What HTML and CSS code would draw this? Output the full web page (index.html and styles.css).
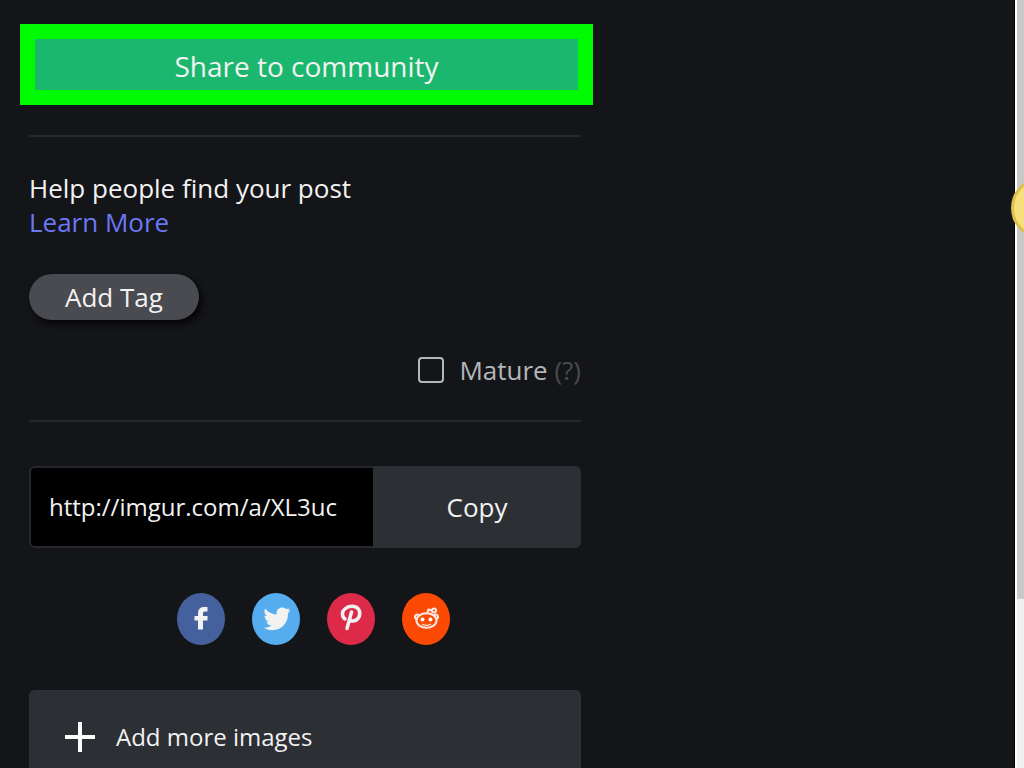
FILE: index.html
```
<!DOCTYPE html>
<html lang="en">
<head>
    <meta charset="UTF-8">
    <link rel="stylesheet" href="styles.css">
    <title>Imgur</title>
</head>
<body>
    <main class="page">
        <button type="button" class="share-btn">Share to community</button>

        <div class="panel">
            <section class="tags">
                <p>Help people find your post</p>
                <a href="#">Learn More</a>
                <button type="button" class="tag-btn">Add Tag</button>
                <div class="mature">
                    <input type="checkbox" id="mature">
                    <label for="mature">Mature <span class="hint">(?)</span></label>
                </div>
            </section>

            <form class="copy-box">
                <input type="text" id="link" aria-label="Post link" value="http://imgur.com/a/XL3uc" readonly>
                <button type="button">Copy</button>
            </form>

            <div class="social">
                <a href="#" class="facebook" aria-label="Facebook">
                    <svg viewBox="0 0 48 52">
                        <path d="M21 36.500V27.500H17.500V23H21V20.500C21 16.500 23 14 27 14H30.500V18.500H28C26.500 18.500 26 19.200 26 20.500V23H30.500V27.500H26V36.500Z" fill="#f2f2f2"/>
                    </svg>
                </a>
                <a href="#" class="twitter" aria-label="Twitter">
                    <svg viewBox="0 0 48 52">
                        <path d="M38 16.500C37 17 36.500 17.300 35.500 17.400C36.500 16.700 36.900 16 37.300 15C36.200 15.600 35.100 15.800 33.900 16C30.500 12.700 24.500 15 24.500 20.200L24.700 21.500C20 21.300 16 19 13.200 15.500C11.700 18.200 12.400 21.300 14.900 23.100C14 23 13.200 22.800 12.500 22.400C12.600 25.700 14.300 28 16.900 28.600C16 28.900 15.200 28.900 14.400 28.700C15.100 31 17 32.500 19.400 32.600C17.200 34.200 14.700 35 11.500 34.700C23.500 41.500 36.500 33.500 36 20.500C37 19.200 37.700 18 38 16.500Z" fill="#f2f2f2"/>
                    </svg>
                </a>
                <a href="#" class="pinterest" aria-label="Pinterest">
                    <svg viewBox="0 0 48 52">
                        <path d="M18 26C14.500 23.500 14.800 18.500 17.800 16C22 12.300 29.500 12.300 32 17C34.200 21.500 31.500 27.500 26.500 28C25 28.200 23.700 27.500 23 26.500M24.500 19L20 35.500" fill="none" stroke="#f2f2f2" stroke-width="3.500" stroke-linecap="round"/>
                    </svg>
                </a>
                <a href="#" class="reddit" aria-label="Reddit">
                    <svg viewBox="0 0 48 52">
                        <g fill="none" stroke="#fbe9e2" stroke-width="2">
                            <ellipse cx="24.500" cy="27.500" rx="10" ry="7.200"/>
                            <path d="M17 22C13.500 20.500 11.500 24 14.500 26.500M32 22C35.500 20.500 37.500 24 34.500 26.500M25 20.500L26.500 16.500L30 17.500"/>
                            <circle cx="32" cy="17.500" r="2"/>
                            <path d="M20 31C22.500 32.700 26.500 32.700 29 31" stroke-width="1.500"/>
                        </g>
                        <circle cx="20.500" cy="26.500" r="2" fill="#fff"/>
                        <circle cx="28.500" cy="26.500" r="2" fill="#fff"/>
                    </svg>
                </a>
            </div>

            <button type="button" class="add-btn">
                <svg viewBox="0 0 32 32">
                    <path d="M16 1V31M1 16H31" stroke="#fff" stroke-width="4"/>
                </svg>
                Add more images
            </button>
        </div>
    </main>

    <div class="scrollbar">
        <div class="thumb"></div>
        <div class="marker"></div>
    </div>
</body>
</html>
```
FILE: styles.css
```
*{
    box-sizing: border-box;
}
body{
    margin: 0;
    display: flex;
    height: 100vh;
    overflow: hidden;
    background: #141518;
    color: #f2f2f2;
    font: 26px/34px "Open Sans", "Noto Sans", sans-serif;
}
button, input{
    margin: 0;
    border: 0;
    padding: 0;
    color: inherit;
    font: inherit;
}
p{
    margin: 0;
}
a{
    color: #6b78f5;
    text-decoration: none;
}
.page{
    flex: 1;
    padding: 24px 20px 0;
}
.share-btn{
    display: block;
    width: 100%;
    max-width: 573px;
    padding: 10px 0 7px;
    border: 15px solid #00fa00;
    background: #1bb76e;
    font-size: 28px;
}
.panel{
    max-width: 570px;
    padding: 0 9px;
}

/* tags */
.tags{
    display: flex;
    flex-direction: column;
    align-items: flex-start;
    margin-top: 30px;
    padding: 34px 0 33px;
    border-top: 2px solid #25272b;
    border-bottom: 2px solid #25272b;
}
.tag-btn{
    margin-top: 35px;
    padding: 6px 36px;
    border-radius: 24px;
    background: #4a4b50;
    box-shadow: 3px 4px 6px #050506;
}
.mature{
    display: flex;
    align-items: center;
    align-self: flex-end;
    gap: 15px;
    margin-top: 33px;
    color: #b4b6ba;
}
.mature input{
    appearance: none;
    width: 26px;
    height: 26px;
    border: 2px solid #b4b6ba;
    border-radius: 4px;
}
.hint{
    color: #494b50;
}

/* link */
.copy-box{
    display: flex;
    height: 82px;
    margin-top: 44px;
}
.copy-box input{
    flex: 1;
    min-width: 0;
    padding: 0 18px;
    border: 2px solid #25272b;
    border-right: 0;
    border-radius: 6px 0 0 6px;
    background: #000;
    font-size: 24px;
}
.copy-box button{
    width: 208px;
    border-radius: 0 6px 6px 0;
    background: #2c2f34;
}

/* social */
.social{
    display: flex;
    justify-content: center;
    gap: 27px;
    margin-top: 45px;
    padding-left: 16px;
}
.social a{
    width: 48px;
    height: 52px;
    border-radius: 50%;
}
.social svg{
    display: block;
}
.facebook{
    background: #45619d;
}
.twitter{
    background: #55acee;
}
.pinterest{
    background: #dc2a48;
}
.reddit{
    background: #fc4a04;
}

.add-btn{
    display: flex;
    align-items: center;
    gap: 20px;
    width: 100%;
    margin-top: 45px;
    padding: 29px 34px;
    border: 1px solid #303338;
    border-radius: 6px;
    background: #2c2f34;
    font-size: 24px;
}
.add-btn svg{
    width: 32px;
    height: 32px;
}

/* scrollbar */
.scrollbar{
    position: relative;
    width: 10px;
    border-left: 1px solid #000;
    background: #f0f0f0;
    box-shadow: inset 2px 0 #fff;
}
.thumb{
    height: 78vh;
    margin-left: 2px;
    background: #c9c9c9;
}
.marker{
    position: absolute;
    top: 177px;
    left: -4px;
    width: 62px;
    height: 62px;
    border: 3px solid #dcbf4c;
    border-radius: 50%;
    background: #f5e07c;
}
```
